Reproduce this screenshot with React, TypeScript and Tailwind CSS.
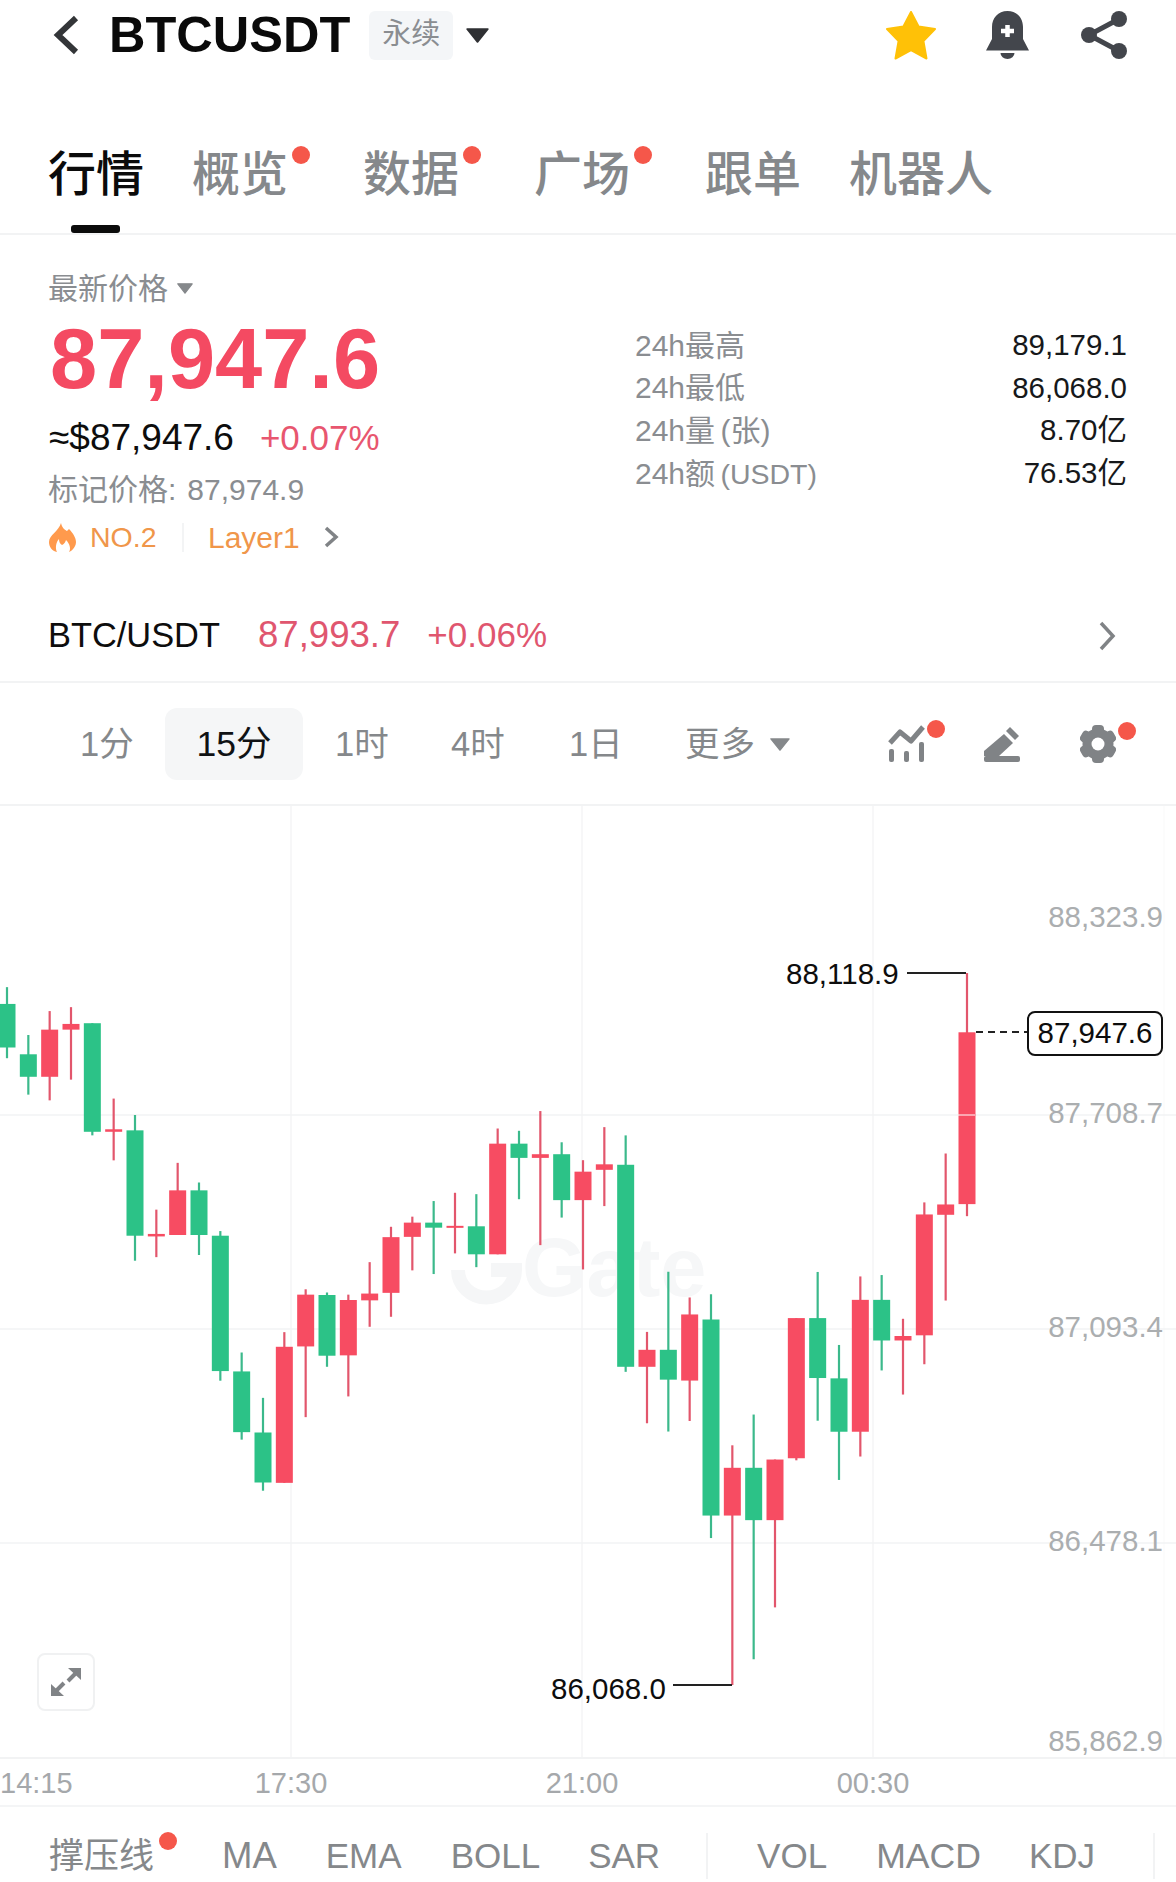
import React from 'react';

type C = [string, number, number, number, number];
const z5 = (v: number) => 960 + v / 2.8;
const z6 = (v: number) => 960 + v / 2.178;
const z7 = (v: number) => 940 + v / 2.904;

const d5: C[] = [
  ['g', 76, 123, 245, 275], ['g', 210, 264, 327, 377], ['r', 143, 195, 327, 393], ['r', 132, 179, 195, 335],
  ['g', 177, 177, 481, 491], ['r', 388, 474, 481, 561], ['g', 434, 477, 772, 842], ['r', 699, 767, 774, 832],
  ['r', 568, 645, 770, 770], ['g', 623, 645, 770, 826], ['g', 759, 772, 1151, 1178], ['g', 1099, 1152, 1322, 1343],
  ['g', 1226, 1323, 1463, 1486], ['r', 1042, 1083, 1464, 1464], ['r', 922, 937, 1082, 1280], ['g', 931, 938, 1108, 1139],
  ['r', 937, 952, 1107, 1222], ['r', 846, 934, 953, 1027], ['r', 747, 776, 932, 999],
];
const d6: C[] = [
  ['r', 559, 572, 603, 676], ['g', 525, 572, 583, 684], ['r', 507, 579, 583, 639], ['g', 510, 580, 641, 669],
  ['r', 367, 400, 641, 641], ['g', 372, 400, 431, 521], ['r', 329, 423, 431, 621], ['g', 397, 423, 523, 561],
  ['r', 436, 461, 523, 674], ['r', 364, 445, 457, 536], ['g', 382, 446, 886, 897], ['r', 810, 849, 886, 1009],
  ['g', 679, 849, 914, 1027], ['r', 735, 772, 916, 1004], ['g', 728, 783, 1210, 1259], ['r', 1057, 1106, 1210, 1579],
  ['g', 990, 1106, 1220, 1523], ['r', 1088, 1088, 1220, 1410],
];
const d7: C[] = [
  ['r', 1098, 1098, 1505, 1511], ['g', 964, 1098, 1272, 1396], ['g', 1176, 1273, 1428, 1568], ['r', 977, 1045, 1428, 1500],
  ['g', 973, 1045, 1163, 1250], ['r', 1100, 1150, 1163, 1320], ['r', 762, 797, 1148, 1232], ['r', 620, 768, 798, 1047],
  ['r', 96, 268, 767, 802],
];
const candles = [
  ...d5.map((c) => [c[0], z5(c[1]), z5(c[2]), z5(c[3]), z5(c[4])] as C),
  ...d6.map((c) => [c[0], z6(c[1]), z6(c[2]), z6(c[3]), z6(c[4])] as C),
  ...d7.map((c) => [c[0], z7(c[1]), z7(c[2]), z7(c[3]), z7(c[4])] as C),
];

function Tri({ w, h, color }: { w: number; h: number; color: string }) {
  return (
    <svg width={w} height={h} viewBox="0 0 20 14" preserveAspectRatio="none" className="shrink-0">
      <path d="M1 1H19L10 13Z" fill={color} stroke={color} strokeWidth="1.5" strokeLinejoin="round" />
    </svg>
  );
}

function Dot({ className }: { className: string }) {
  return <span className={`absolute w-[18px] h-[18px] rounded-full bg-[#f5574a] ${className}`} />;
}

function Tab({ label, active, dot }: { label: string; active?: boolean; dot?: boolean }) {
  return (
    <div className={`relative h-[60px] flex items-center ${dot ? 'mr-[27px]' : ''}`}>
      <span className={`text-[48px] leading-[60px] font-medium ${active ? 'text-[#0b0b0b]' : 'text-[#85888b]'}`}>{label}</span>
      {dot && <Dot className="right-[-22px] top-[1px]" />}
      {active && <span className="absolute left-[23px] top-[80px] w-[49px] h-[8px] rounded-[3px] bg-[#0b0b0b]" />}
    </div>
  );
}

function Stat({ label, value }: { label: React.ReactNode; value: string }) {
  return (
    <div className="h-[42.6px] flex items-center justify-between">
      <span className="text-[30px] text-[#8a8d91] [word-spacing:-3px]">{label}</span>
      <span className="text-[29.5px] text-[#16181a]">{value}</span>
    </div>
  );
}

function YLabel({ y, text }: { y: number; text: string }) {
  return (
    <span className="absolute right-[13px] text-[29.5px] leading-[36px] text-[#abaeb0]" style={{ top: y - 806 - 18 }}>
      {text}
    </span>
  );
}

export default function App() {
  return (
    <div className="w-[1176px] h-[1882px] overflow-hidden bg-white [font-family:'Liberation_Sans','Noto_Sans_CJK_SC',sans-serif]">
      {/* header */}
      <div className="h-[70px] flex items-center pl-[53px]">
        <svg width="26" height="40" viewBox="0 0 26 40" className="shrink-0">
          <path d="M23 3L5 20L23 37" fill="none" stroke="#333538" strokeWidth="6" />
        </svg>
        <span className="ml-[30px] text-[50.5px] leading-[60px] font-bold text-[#0a0a0a]">BTCUSDT</span>
        <span className="ml-[19px] w-[84px] h-[49px] rounded-[6px] bg-[#f4f6f8] flex items-center justify-center text-[29px] text-[#8a8d91]">永续</span>
        <span className="ml-[13px]"><Tri w={23} h={15} color="#2f3033" /></span>
        <svg width="50" height="49" viewBox="0 0 50 49" className="ml-[397px] shrink-0">
          <path d="M25 1L32.6 15.5L49 18L37.4 30L40.5 47.5L25 39L9.5 47.5L12.6 30L1 18L17.4 15.5Z" fill="#ffc107" stroke="#ffc107" strokeWidth="2" strokeLinejoin="round" />
        </svg>
        <svg width="43" height="48" viewBox="0 0 43 48" className="ml-[50px] shrink-0">
          <path d="M21.5 0C12 0 6 7 6 16V28L0 39.5H43L37 28V16C37 7 31 0 21.5 0Z" fill="#43464c" />
          <path d="M14.5 42H28.5A7 6 0 0 1 14.5 42Z" fill="#43464c" />
          <path d="M21.5 14V26M15 20H28" stroke="#fff" strokeWidth="4.5" />
        </svg>
        <svg width="46" height="48" viewBox="0 0 46 48" className="ml-[52px] shrink-0">
          <path d="M38 8L8 24L38 40" fill="none" stroke="#43464c" strokeWidth="5" />
          <circle cx="38" cy="8" r="8" fill="#43464c" />
          <circle cx="8" cy="24" r="8" fill="#43464c" />
          <circle cx="38" cy="40" r="8" fill="#43464c" />
        </svg>
      </div>

      {/* tabs */}
      <div className="h-[165px] border-b-2 border-[#f2f3f4] pl-[48px] pt-[75px] flex items-start gap-[48px]">
        <Tab label="行情" active />
        <Tab label="概览" dot />
        <Tab label="数据" dot />
        <Tab label="广场" dot />
        <Tab label="跟单" />
        <Tab label="机器人" />
      </div>

      {/* price */}
      <div className="h-[353px] flex">
        <div className="w-[635px] pl-[48px] pt-[36px]">
          <div className="h-[34px] flex items-center text-[30px] text-[#8a8d91]">
            最新价格
            <span className="ml-[9px]"><Tri w={16} h={11} color="#85888b" /></span>
          </div>
          <div className="mt-[9px] ml-[2px] h-[90px] leading-[90px] text-[84.8px] font-bold text-[#f44a62]">87,947.6</div>
          <div className="mt-[12px] h-[44px] flex items-center">
            <span className="ml-[1px] text-[37px] text-[#0d0d0d]">≈$87,947.6</span>
            <span className="ml-[26px] text-[35px] text-[#e8566f]">+0.07%</span>
          </div>
          <div className="mt-[9px] h-[40px] flex items-center text-[30px] text-[#8a8d91]">
            标记价格:<span className="ml-[11px]">87,974.9</span>
          </div>
          <div className="mt-[10px] h-[36px] flex items-center">
            <svg width="27" height="29" viewBox="0 0 27 29" className="ml-[1px] shrink-0">
              <path d="M12 0C13 6 18 8 18 8L20 6C24 10 27 15 27 19C27 25 21 29 20 29C22 26 21 21 17 17C16 21 13 22 13 22C11 21 10 19 10 16C7 19 6 25 8 29C3 28 0 24 0 19C0 12 10 8 12 0Z" fill="#ff9a4d" />
            </svg>
            <span className="ml-[14px] w-[66px] text-[28.5px] text-[#f0964a]">NO.2</span>
            <span className="ml-[26px] w-[2px] h-[29px] bg-[#f3f4f5]" />
            <span className="ml-[24px] text-[30px] text-[#f0964a]">Layer1</span>
            <svg width="16" height="22" viewBox="0 0 16 22" className="ml-[23px] shrink-0">
              <path d="M3 2L13 11L3 20" fill="none" stroke="#808386" strokeWidth="3.5" />
            </svg>
          </div>
        </div>
        <div className="w-[492px] pt-[89px]">
          <Stat label="24h最高" value="89,179.1" />
          <Stat label="24h最低" value="86,068.0" />
          <Stat label="24h量 (张)" value="8.70亿" />
          <Stat label={<>24h额 <span className="text-[28.5px]">(USDT)</span></>} value="76.53亿" />
        </div>
      </div>

      {/* spot row */}
      <div className="h-[95px] border-b-2 border-[#f2f3f4] pt-[2px] pl-[48px] pr-[60px] flex items-center">
        <span className="text-[34.4px] text-[#0d0d0d]">BTC/USDT</span>
        <span className="ml-[38px] text-[36.6px] text-[#e0566f]">87,993.7</span>
        <span className="ml-[27px] text-[35px] text-[#e0566f]">+0.06%</span>
        <svg width="18" height="30" viewBox="0 0 18 30" className="ml-auto shrink-0">
          <path d="M3 2L15 15L3 28" fill="none" stroke="#808386" strokeWidth="3.5" />
        </svg>
      </div>

      {/* timeframe */}
      <div className="h-[123px] border-b-2 border-[#f2f3f4] pl-[80px] flex items-center whitespace-nowrap text-[34.5px] text-[#85888b]">
        <span className="w-[53px] pt-[2px]">1分</span>
        <span className="ml-[32px] w-[138px] h-[72px] pt-[2px] rounded-[12px] bg-[#f5f6f7] flex items-center justify-center text-[#101214] text-[35.5px]">15分</span>
        <span className="ml-[32px] w-[54px] pt-[2px]">1时</span>
        <span className="ml-[62px] w-[54px] pt-[2px]">4时</span>
        <span className="ml-[64px] w-[54px] pt-[2px]">1日</span>
        <span className="ml-[62px] w-[70px] pt-[2px] tracking-[1px]">更多</span>
        <span className="ml-[15px] pt-[2px]"><Tri w={20} h={13} color="#85888b" /></span>
        <div className="relative ml-[98px] w-[37px] h-[37px]">
          <svg width="37" height="37" viewBox="0 0 37 37">
            <path d="M2 18L12 7L23 16L35 2" fill="none" stroke="#808386" strokeWidth="5" strokeLinejoin="round" />
            <rect x="1" y="24" width="5" height="13" rx="2" fill="#808386" />
            <rect x="16" y="26" width="5" height="11" rx="2" fill="#808386" />
            <rect x="31" y="17" width="5" height="20" rx="2" fill="#808386" />
          </svg>
          <Dot className="left-[39px] top-[-5px]" />
        </div>
        <svg width="36" height="36" viewBox="0 0 36 36" className="ml-[59px] shrink-0">
          <path d="M0 30V25L20 8L29 17L15 30Z" fill="#808386" />
          <path d="M22 5L26 1L35 10L31 14Z" fill="#808386" />
          <rect x="0" y="30" width="36" height="6" rx="2" fill="#808386" />
        </svg>
        <div className="relative ml-[60px] w-[36px] h-[38px]">
          <svg width="36" height="38" viewBox="0 0 36 38">
            <circle cx="18" cy="19" r="15.5" fill="#808386" />
            <rect x="12" y="0" width="12" height="38" rx="4" fill="#808386" />
            <rect x="12" y="0" width="12" height="38" rx="4" fill="#808386" transform="rotate(60 18 19)" />
            <rect x="12" y="0" width="12" height="38" rx="4" fill="#808386" transform="rotate(120 18 19)" />
            <circle cx="18" cy="19" r="6.5" fill="#fff" />
          </svg>
          <Dot className="left-[38px] top-[-3px]" />
        </div>
      </div>

      {/* chart */}
      <div className="relative h-[953px] border-b-2 border-[#f2f3f4]">
        <span className="absolute left-[522px] top-[422px] text-[83px] leading-[80px] font-bold text-[#f6f7f8]">Gate</span>
        <svg width="1176" height="951" viewBox="0 806 1176 951" className="absolute left-0 top-0">
          <path d="M458 1270a28 27 0 1 0 57 0h-24" fill="none" stroke="#f5f6f7" strokeWidth="14" />
          {[291, 582, 873].map((x) => (
            <line key={x} x1={x} x2={x} y1="806" y2="1757" stroke="#f4f5f6" strokeWidth="1.5" />
          ))}
          <line x1="1164" x2="1164" y1="806" y2="1757" stroke="#fbfbfb" strokeWidth="1.5" />
          {[1115, 1329, 1543].map((y) => (
            <line key={y} x1="0" x2="1176" y1={y} y2={y} stroke="#f2f3f4" strokeWidth="1.5" />
          ))}
          {candles.map((c, i) => {
            const cx = 7 + (i * 64) / 3;
            const red = c[0] === 'r';
            return (
              <g key={i}>
                <line x1={cx} x2={cx} y1={c[1]} y2={c[4]} stroke={red ? '#e2566c' : '#3bb98b'} strokeWidth="2.2" />
                <rect x={cx - 8.5} y={c[2]} width="17" height={Math.max(c[3] - c[2], 2)} fill={red ? '#f74c62' : '#2cc287'} />
              </g>
            );
          })}
          <line x1="958" x2="975" y1="1115" y2="1115" stroke="#fff" strokeWidth="1" />
          <path d="M907 973H966" stroke="#222" strokeWidth="2" fill="none" />
          <path d="M673 1685H732" stroke="#222" strokeWidth="2" fill="none" />
          <path d="M976 1032H1028" stroke="#222" strokeWidth="2" strokeDasharray="7 5" fill="none" />
        </svg>

        <span className="absolute left-[786px] top-[150px] text-[29.5px] leading-[36px] text-[#0d0d0d]">88,118.9</span>
        <span className="absolute left-[551px] top-[865px] text-[29.5px] leading-[36px] text-[#0d0d0d]">86,068.0</span>
        <span className="absolute left-[1027px] top-[205px] w-[136px] h-[45px] rounded-[8px] border-2 border-[#111] bg-white flex items-center justify-center text-[29.5px] text-[#0d0d0d]">87,947.6</span>

        <YLabel y={917} text="88,323.9" />
        <YLabel y={1113} text="87,708.7" />
        <YLabel y={1327} text="87,093.4" />
        <YLabel y={1541} text="86,478.1" />
        <YLabel y={1741} text="85,862.9" />

        <div className="absolute left-[37px] top-[847px] w-[58px] h-[58px] rounded-[8px] border-2 border-[#f0f1f2] bg-white flex items-center justify-center">
          <svg width="30" height="28" viewBox="0 0 30 28">
            <path d="M17 0H30V12Z" fill="#808386" />
            <path d="M13 28H0V16Z" fill="#808386" />
            <path d="M25 5L17 13M5 23L13 15" stroke="#808386" strokeWidth="4" />
          </svg>
        </div>
      </div>

      {/* x axis */}
      <div className="h-[48px] pt-[4px] border-b-2 border-[#f4f5f6] flex items-center text-[29px] text-[#a5a8ab]">
        <span className="w-[218px]">14:15</span>
        <span className="w-[146px] text-center">17:30</span>
        <span className="ml-[145px] w-[146px] text-center">21:00</span>
        <span className="ml-[145px] w-[146px] text-center">00:30</span>
      </div>

      {/* indicators */}
      <div className="h-[75px] pt-[23px] pl-[49px] flex items-center text-[35px] leading-[52px] text-[#85888b]">
        <div className="relative">
          撑压线
          <Dot className="left-[110px] top-[2px]" />
        </div>
        <span className="ml-[68px] text-[36.5px]">MA</span>
        <span className="ml-[49px]">EMA</span>
        <span className="ml-[49px]">BOLL</span>
        <span className="ml-[48px]">SAR</span>
        <span className="ml-[46px] w-[2px] h-[46px] bg-[#f2f3f4]" />
        <span className="ml-[49px]">VOL</span>
        <span className="ml-[49px] text-[35.6px]">MACD</span>
        <span className="ml-[48px]">KDJ</span>
        <span className="ml-[58px] w-[2px] h-[46px] bg-[#f2f3f4]" />
      </div>
    </div>
  );
}
